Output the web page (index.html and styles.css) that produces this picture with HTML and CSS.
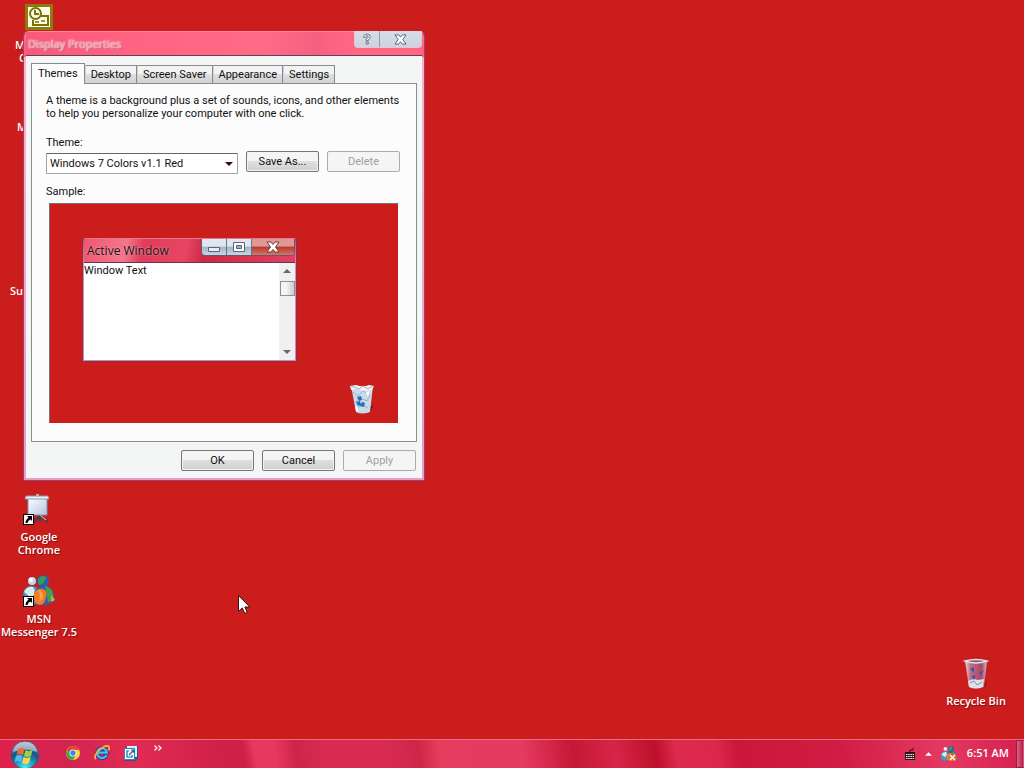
FILE: index.html
```html
<!DOCTYPE html>
<html lang="en">
<head>
<meta charset="utf-8">
<title>Desktop</title>
<link rel="stylesheet" href="styles.css">
</head>
<body>
<svg class="defs" aria-hidden="true">
  <defs>
    <linearGradient id="bin-glass" x1="0" x2="1" y1="0" y2="0"><stop offset="0" stop-color="#d9dde8"/><stop offset=".25" stop-color="#c96a7c"/><stop offset=".75" stop-color="#a84a68"/><stop offset="1" stop-color="#d4b8c4"/></linearGradient>
    <radialGradient id="orb" cx=".5" cy=".95" r=".95"><stop offset="0" stop-color="#4ff0f4"/><stop offset=".35" stop-color="#1898b8"/><stop offset=".65" stop-color="#1c4f80"/><stop offset="1" stop-color="#b8c4d4"/></radialGradient>
    <linearGradient id="screen" x1="0" x2="1" y1="0" y2="1"><stop offset="0" stop-color="#fff"/><stop offset="1" stop-color="#b4c4e4"/></linearGradient>
    <symbol id="shortcut" viewBox="0 0 11 11"><path d="M0 0h11v11H0z" fill="#000"/><path d="M1 1h9v9H1z" fill="#fff"/><path d="M4 2h5v5L7.600 5.600Q5 6.500 4.500 9H2.500Q2.500 5.500 5.600 3.700z" fill="#000"/></symbol>
    <symbol id="buddies" viewBox="0 0 32 32"><circle cx="9" cy="6" r="4" fill="#b9dcec"/><circle cx="8" cy="5" r="2" fill="#fff"/><path d="M0 22Q0 11 8 11q7 0 8 6v12H3q-3-2-3-7z" fill="#3a9cc8"/><path d="M1 17q3-6 9-5l4 7-7 3z" fill="#d5eee8"/><circle cx="20" cy="6" r="6" fill="#2862a8"/><path d="M15 6a5 5 0 0 1 8-4q-1 7-7 8z" fill="#3b9a5e"/><path d="M11 19q1-8 10-8 9 0 10 9l1 6-9 4H12z" fill="#2463b0"/><path d="M22 11q7 1 8 8l1 6-6 2z" fill="#469e4c"/><path d="M28 20l4 5-4 2z" fill="#d9a93a"/><path d="M11 18q3-5 9-4 5 2 3 8-1 7-6 8-6-1-6-6z" fill="#f17b2c"/><path d="M15 15q6 1 5 8l-4 4q2-7-1-12z" fill="#f7a43c"/></symbol>
  </defs>
</svg>

<main class="desktop">
  <div class="shortcut outlook">
    <svg class="outlook-icon" viewBox="0 0 28 26"><path d="M0 0h28v26H0z" fill="#8a7d08"/><path d="M3 3h22v20H3z" fill="#fffde9"/><g fill="none" stroke="#7c7208" stroke-width="2"><circle cx="10.500" cy="9.500" r="5.500"/><path d="M10 6v4h4M16 12h7v9H8v-5"/><path d="M10 18h4M16 17h4" stroke-width="1.500"/></g></svg>
    <span class="covered">M</span><span class="covered second">C</span>
  </div>
  <span class="covered-label row-two">M</span>
  <span class="covered-label row-four">Su</span>

  <a class="shortcut chrome" href="#">
    <svg class="icon" viewBox="0 0 32 32"><path d="M17 23l-6 6M17 23l8 6M17 21v8" stroke="#3c4450" stroke-width="2"/><path d="M17 22l6 5" stroke="#d6dae2"/><path d="M5 5h19v17H5z" fill="url(#screen)" stroke="#8392b0"/><path d="M3 3h22l1 3H2z" fill="#eef0f5" stroke="#8b97ad"/><path d="M13 1h3v3h-3z" fill="#aab2bd"/><use href="#shortcut" x="0" y="21" width="11" height="11"/></svg>
    <span>Google<br>Chrome</span>
  </a>
  <a class="shortcut msn" href="#">
    <svg class="icon" viewBox="0 0 32 32"><use href="#buddies" width="32" height="32"/><use href="#shortcut" x="0" y="21" width="11" height="11"/></svg>
    <span>MSN<br>Messenger 7.5</span>
  </a>
  <a class="shortcut recycle" href="#">
    <svg class="icon" viewBox="0 0 32 32"><path d="M22 29l5-6-2 7-7 2z" fill="#8c1018"/><path d="M5 4h22l-3 26q-8 3-15 0z" fill="url(#bin-glass)"/><path d="M8 24l5-2 5 1 6-1-1 8q-7 3-14 0z" fill="#dce2e7"/><path d="M10 26l4-2 3 4 5-3" fill="none" stroke="#89939b"/><path d="M10 12l4-2v6zm2 6l4 1-3 4zm7-2l5-3-3 5" fill="#3854c0"/><path d="M5 4q11-3 22 0-11 4-22 0z" fill="#806077" stroke="#dfe3e8" stroke-width="1.500"/></svg>
    <span>Recycle Bin</span>
  </a>

  <section class="dialog" aria-label="Display Properties">
    <header class="titlebar">
      <h1>Display Properties</h1>
      <div class="caption">
        <button class="help" aria-label="Help"><svg viewBox="0 0 12 14"><path d="M2 5V3.500Q3 1 6 1q4 0 4 3.500 0 2-2.500 3.500v1H5V7q2.500-1 2.500-2.500Q7.500 3 6 3 4.500 3 4.500 5zM5 10.500h2.500V13H5z" fill="#fff" stroke="#505b78"/></svg></button>
        <button class="close" aria-label="Close"><svg viewBox="0 0 14 12"><path d="M1 1h4l2 2.500L9 1h4L9.500 6l3.500 5H9L7 8.500 5 11H1l3.500-5z" fill="#fff" stroke="#505b78"/></svg></button>
      </div>
    </header>
    <div class="client">
      <nav class="tabs" role="tablist">
        <button class="tab active" role="tab" aria-selected="true">Themes</button>
        <button class="tab" role="tab">Desktop</button>
        <button class="tab" role="tab">Screen Saver</button>
        <button class="tab" role="tab">Appearance</button>
        <button class="tab" role="tab">Settings</button>
      </nav>
      <div class="panel" role="tabpanel">
        <p>A theme is a background plus a set of sounds, icons, and other elements<br>to help you personalize your computer with one click.</p>
        <label class="theme-label" for="theme">Theme:</label>
        <div class="theme-row">
          <div class="select-wrap">
            <select id="theme"><option>Windows 7 Colors v1.1 Red</option></select>
            <svg class="select-arrow" viewBox="0 0 8 4"><path d="M0 0h8L4 4z" fill="#330910"/></svg>
          </div>
          <button class="btn">Save As...</button>
          <button class="btn" disabled>Delete</button>
        </div>
        <div class="sample-label">Sample:</div>
        <div class="sample">
          <div class="mini">
            <div class="mini-title">
              <span>Active Window</span>
              <div class="mini-caption">
                <button aria-label="Minimize"><svg viewBox="0 0 14 12"><path d="M1.500 6.500h11v4h-11z" fill="#e6edf3" stroke="#596580"/></svg></button>
                <button aria-label="Maximize"><svg viewBox="0 0 14 12"><path d="M1.500 1.500h11v9h-11z" fill="#fff" stroke="#596580"/><path d="M4.500 4.500h5v3h-5z" fill="#9eafc0" stroke="#596580"/></svg></button>
                <button class="mini-close" aria-label="Close sample"><svg viewBox="0 0 14 12"><path d="M1 1h4l2 2.500L9 1h4L9.500 6l3.500 5H9L7 8.500 5 11H1l3.500-5z" fill="#fff" stroke="#6c3c46"/></svg></button>
              </div>
            </div>
            <div class="mini-body">
              <span>Window Text</span>
              <div class="scroll">
                <svg viewBox="0 0 8 4"><path d="M0 4h8L4 0z" fill="#66686c"/></svg>
                <i class="thumb"></i>
                <svg class="down" viewBox="0 0 8 4"><path d="M0 0h8L4 4z" fill="#66686c"/></svg>
              </div>
            </div>
          </div>
          <svg class="sample-bin" viewBox="0 0 32 32"><path d="M22 26l6-4-4 7-7 2z" fill="#651821"/><path d="M5 3h22l-3 26q-8 3-14 0z" fill="#c9daeb"/><path d="M4 3l6-1 7 2 6-2 5 1-2 4-8 1-7-2-6 1z" fill="#eef3f6"/><path d="M5 3l8 3 4-3 5 3 5-3M7 9l5 4 5-5 7 4-3 6-7-3-5 4M11 26l5-4 6 3" fill="none" stroke="#a3b3c6"/><path d="M11 14l4-1 1 4-3 1zm-1 5l4-1 1 4-3 1zm6 0l3 1-1 4-4-1z" fill="#266cb8"/><path d="M20 9l4-1-2 6zM9 23l3 2v4l-2-1z" fill="#fff"/></svg>
        </div>
      </div>
      <footer class="actions">
        <button class="btn">OK</button>
        <button class="btn">Cancel</button>
        <button class="btn" disabled>Apply</button>
      </footer>
    </div>
  </section>

  <svg class="cursor" viewBox="0 0 12 19"><path d="M.5.500v16l3.800-3.600 2.500 5.600 2.500-1.100-2.500-5.400h5z" fill="#fff" stroke="#351016"/></svg>
</main>

<footer class="taskbar">
  <button class="start" aria-label="Start"><svg viewBox="0 0 30 28"><circle cx="15" cy="15" r="14" fill="url(#orb)" stroke="#65475f"/><path d="M3 12Q5 2 15 2t12 10q-12-5-24 0z" fill="#c9d3df" opacity=".65"/><path d="M8 9q4-2 6.500 0L13 15q-3-2-6.500 0z" fill="#f16a30"/><path d="M15.500 10q3 2 7 0L21 16q-4 2-7 0z" fill="#9bd345"/><path d="M6 16q3-2 6.500 0L11 22q-3-2-6.500 0z" fill="#55b8f0"/><path d="M13.500 17q3 2 7 0L19 23q-3 2-7 0z" fill="#ffd34c"/></svg></button>
  <nav class="quick">
    <button aria-label="Google Chrome"><svg viewBox="0 0 16 16"><circle cx="8" cy="8" r="7" fill="#ffd23f"/><path d="M2 4.500A7 7 0 0 1 14.500 5H8L5 9z" fill="#e64535"/><path d="M2 4.500A7 7 0 0 0 8 15l3-5-5 0z" fill="#43a651"/><circle cx="8" cy="8" r="3.500" fill="#fff"/><circle cx="8" cy="8" r="2.700" fill="#4285d8"/></svg></button>
    <button aria-label="Internet Explorer"><svg viewBox="0 0 18 18"><path d="M14 11.500A5.500 5.500 0 1 1 14.500 8.500H5" fill="none" stroke="#16468f" stroke-width="4.500"/><path d="M14 11.500A5.500 5.500 0 1 1 14.500 8.500H5" fill="none" stroke="#54b8ee" stroke-width="2.500"/><path d="M2 16Q-1 12 7 5q7-6 10-3 1 1-1 4" fill="none" stroke="#f6b43c" stroke-width="2"/></svg></button>
    <button aria-label="Show Desktop"><svg viewBox="0 0 16 16"><path d="M4 1h11v12l-3 3H1V4z" fill="#1d5a92"/><path d="M4 1h10v11H4z" fill="#d5eefa"/><path d="M1.500 3.500h10v11h-10z" fill="#f7fbff" stroke="#3b80b5"/><path d="M6 6H4v6h5v-2M6 10l5-5M8 5h3v3" fill="none" stroke="#235f9c" stroke-width="1.200"/></svg></button>
    <button class="more" aria-label="More shortcuts"><svg viewBox="0 0 8 6"><path d="M.5.500L3 3 .500 5.500M4.500.500L7 3 4.500 5.500" fill="none" stroke="#fff" stroke-width="1.200"/></svg></button>
  </nav>
  <div class="tray">
    <svg class="keyboard" viewBox="0 0 12 12"><path d="M6 4V2h3V0" fill="none" stroke="#301018"/><path d="M1 4h10v8H1z" fill="#301018"/><path d="M2 6.500h8M2 8.500h8M2 10.500h8" stroke="#fff" stroke-dasharray="1.500 .700"/></svg>
    <svg class="chevron" viewBox="0 0 8 4"><path d="M0 4h8L4 0z" fill="#fff"/></svg>
    <svg class="status" viewBox="0 0 16 16"><use href="#buddies" width="16" height="16"/><path d="M8 8h7v7H8z" fill="#e66a20"/><path d="M9 9l5 5m0-5l-5 5" stroke="#fff" stroke-width="1.500"/></svg>
    <time>6:51 AM</time>
    <button class="peek" aria-label="Show desktop"></button>
  </div>
</footer>
</body>
</html>
```

FILE: styles.css
```css
* { box-sizing: border-box; }
body {
  margin: 0;
  height: 100vh;
  display: flex;
  flex-direction: column;
  overflow: hidden;
  background: #cc1d1d;
  font: 11px/13px Roboto, "Liberation Sans", Arial, sans-serif;
  color: #111;
}
button, select { font: inherit; color: inherit; margin: 0; padding: 0; }
button { border: 0; background: none; }
svg { display: block; }
.defs { position: absolute; width: 0; height: 0; }

.desktop { flex: 1; position: relative; }

.shortcut {
  position: absolute;
  display: flex;
  flex-direction: column;
  align-items: center;
  gap: 5px;
  width: 80px;
  color: #fff;
  text-align: center;
  text-decoration: none;
  white-space: nowrap;
}
.shortcut, .covered-label { font: 600 11px/13px "Open Sans", "Noto Sans", sans-serif; }
.shortcut span { text-shadow: 1px 1px 1px #7c1010; }
.icon { width: 32px; height: 32px; }
.outlook { left: 15px; top: 4px; width: 48px; gap: 0; }
.outlook-icon { width: 28px; height: 26px; margin-bottom: 8px; }
.covered { align-self: flex-start; }
.second { padding-left: 4px; }
.covered-label { position: absolute; color: #fff; }
.row-two { left: 17px; top: 120px; }
.row-four { left: 10px; top: 284px; }
.chrome { left: -1px; top: 493px; }
.msn { left: -1px; top: 575px; }
.recycle { right: 8px; bottom: 32px; }

.dialog {
  position: absolute;
  left: 23px;
  top: 31px;
  width: 402px;
  padding: 0 2px 2px;
  border: 1px solid #a23c78;
  border-top-color: #ff8ba6;
  border-radius: 6px 6px 0 0;
  background: linear-gradient(#ff7590, #f95a7b 24px, #fbb3c6 26px, #e3a0c4);
}
.titlebar {
  display: flex;
  justify-content: space-between;
  align-items: flex-start;
  height: 23px;
  background: linear-gradient(90deg, #f8597a, #ff6381 25%, #ff6b87 60%, #f66080 73%, #ff6684 82%);
}
.titlebar h1 {
  margin: 5px 0 0 2px;
  font: 11px/13px "Open Sans", "Noto Sans", sans-serif;
  color: #f78ca1;
  text-shadow: 0 0 1px #fff, 0 0 2px #fff, 1px 1px 1px #9c5260;
}
.caption {
  display: flex;
  height: 17px;
  margin-top: -1px;
  border: 1px solid #e7c4d0;
  border-top: 0;
  border-radius: 0 0 4px 4px;
  background: linear-gradient(#d5dde8, #cbd4df);
}
.caption button { display: grid; place-items: center; }
.help { width: 25px; border-right: 1px solid #8c9cb0; }
.help svg { width: 10px; height: 12px; }
.close { width: 41px; }
.close svg { width: 13px; height: 11px; }

.client {
  padding: 7px 5px 7px;
  border-top: 1px solid #654058;
  background: #f4f5f5;
}
.tabs { display: flex; align-items: flex-end; }
.tab {
  height: 18px;
  padding: 0 5px;
  border: 1px solid #858b8d;
  border-bottom: 0;
  border-left-color: #d0d3d4;
  background: linear-gradient(#f3f3f3 45%, #dedede 50%, #d2d2d2);
}
.tab.active {
  position: relative;
  height: 21px;
  margin-bottom: -1px;
  padding: 0 6px 2px;
  border-left-color: #858b8d;
  background: #fcfcfc;
}
.panel {
  padding: 10px 16px 18px 14px;
  border: 1px solid #84908f;
  background: #fcfcfc;
}
.panel p { margin: 0; white-space: nowrap; }
.theme-label { display: block; margin-top: 16px; }
.theme-row { display: flex; gap: 8px; margin-top: 1px; align-items: flex-end; }
.theme-row .btn { margin-bottom: 2px; }
.select-wrap { position: relative; flex: 1; margin-top: 3px; }
.select-wrap select {
  appearance: none;
  display: block;
  width: 100%;
  height: 21px;
  padding: 0 16px 0 3px;
  border: 1px solid #a4a4a4;
  border-top-color: #666;
  background: #fff;
}
.select-arrow { position: absolute; right: 5px; top: 9px; width: 8px; height: 4px; pointer-events: none; }
.btn {
  width: 73px;
  height: 21px;
  border: 1px solid #73777a;
  border-radius: 2px;
  background: linear-gradient(#f5f5f5 45%, #dfdfdf 50%, #cfcfcf);
  box-shadow: inset 0 0 0 1px #f4f4f4;
}
.btn:disabled { border-color: #a9adb0; background: #f5f5f5; color: #a0a0a0; }
.sample-label { margin-top: 11px; }
.sample {
  position: relative;
  height: 220px;
  margin: 5px 2px 0 3px;
  padding: 34px 32px;
  border: 1px solid #79716f;
  border-right-color: #cc1d1d;
  border-bottom-color: #cc1d1d;
  background: #cc1d1d;
}
.mini {
  width: 215px;
  padding: 0 1px 1px;
  border: 1px solid #843156;
  border-top-color: #e9768b;
  border-radius: 4px 4px 0 0;
  background: linear-gradient(#e04360, #e58aa9 26px, #dc82b0);
}
.mini-title {
  display: flex;
  justify-content: space-between;
  height: 23px;
  background: linear-gradient(100deg, #ed5870 0, #f5768c 20%, #df3d5b 28%, #e74662 48%, #cc2946 57%, #e14262);
}
.mini-title > span { padding: 5px 0 0 3px; font: 12px/14px "Open Sans", "Noto Sans", sans-serif; text-shadow: 0 0 2px #ffb0bc; }
.mini-caption { display: flex; height: 17px; border: 1px solid #69566e; border-top: 0; border-radius: 0 0 4px 4px; background: linear-gradient(#dfe6ef 45%, #a4b4c4 50%, #c5d6e2); overflow: hidden; }
.mini-caption button { display: grid; place-items: center; width: 25px; border-right: 1px solid #65758a; }
.mini-caption svg { width: 14px; height: 12px; }
.mini-caption .mini-close { width: 42px; border-right: 0; background: linear-gradient(#df9992 45%, #b73830 50%, #d97561); }
.mini-body {
  display: flex;
  justify-content: space-between;
  height: 98px;
  border-top: 1px solid #693448;
  background: #fff;
}
.mini-body > span { padding-top: 1px; }
.scroll { display: flex; flex-direction: column; align-items: center; width: 16px; padding: 6px 0; background: #f0f0f0; }
.scroll svg { width: 8px; height: 4px; }
.thumb { width: 15px; height: 15px; margin-top: 8px; border: 1px solid #8b8f96; background: linear-gradient(90deg, #f5f5f5 40%, #c9cbd0); }
.scroll .down { margin-top: auto; }
.sample-bin { position: absolute; right: 19px; bottom: 7px; width: 32px; height: 32px; }
.actions { display: flex; justify-content: flex-end; gap: 8px; padding: 8px 1px 0; }

.cursor { position: absolute; left: 238px; top: 595px; width: 12px; height: 19px; }

.taskbar {
  display: flex;
  align-items: center;
  height: 29px;
  border-top: 1px solid #f16b83;
  background: linear-gradient(80deg, #df204d 0, #d22450 7%, #e22b52 13%, #cf2148 22%, #cf2148 24%, #e7395d 25%, #e7395d 27%, #cf2448 29%, #d92b52 32%, #d92b52 38%, #cf2547 41%, #e63c5e 43%, #e63a60 51%, #c51736 56%, #d62648 60%, #bd102b 64%, #dc2b4e 66%, #dc274a 70%, #cb173b 72%, #d11d43 82%, #e43962 92%, #d51e4e);
}
.start { margin: 0 0 0 10px; }
.start svg { width: 30px; height: 28px; }
.quick { display: flex; align-items: center; gap: 13px; margin-left: 25px; padding-bottom: 2px; }
.quick svg { width: 16px; height: 16px; }
.quick .more { align-self: flex-start; margin-left: 2px; }
.quick .more svg { width: 8px; height: 6px; }
.tray { display: flex; align-items: center; height: 100%; margin-left: auto; color: #fff; font: 600 11px/13px "Open Sans", "Noto Sans", sans-serif; }
.tray time { padding-bottom: 3px; }
.keyboard { width: 12px; height: 12px; margin-right: 9px; }
.chevron { width: 7px; height: 4px; margin-right: 9px; }
.status { width: 16px; height: 16px; margin-right: 10px; }
.peek { width: 8px; height: 100%; margin-left: 7px; border: 1px solid #8e2142; border-right-color: #e35078; background: linear-gradient(90deg, #df6385, #b81d48); }
```
